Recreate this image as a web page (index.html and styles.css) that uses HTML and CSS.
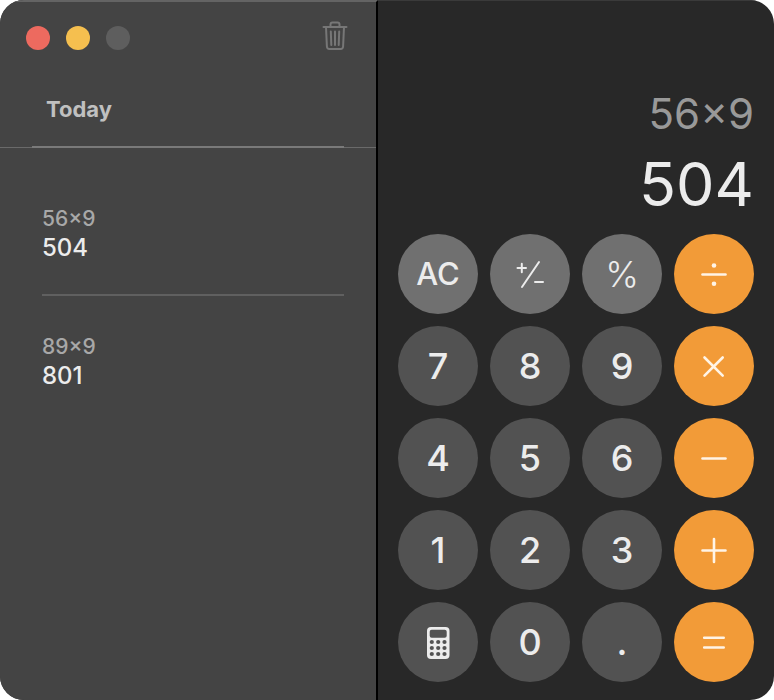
FILE: index.html
```html
<!DOCTYPE html>
<html lang="en">
<head>
  <meta charset="UTF-8">
  <meta name="viewport" content="width=device-width, initial-scale=1.0">
  <title>Calculator</title>
  <link rel="stylesheet" href="styles.css">
</head>
<body>
  <div class="window">
    <aside class="sidebar">
      <div class="toolbar">
        <button class="light close" aria-label="Close"></button>
        <button class="light minimize" aria-label="Minimize"></button>
        <button class="light zoom" aria-label="Zoom" disabled></button>
        <button class="trash" aria-label="Clear history">
          <svg width="26" height="34" viewBox="0 0 26 34">
            <path d="M1.500 6H24.500M8.500 6V3.500Q8.500 1.500 10.500 1.500H15.500Q17.500 1.500 17.500 3.500V6M4 6L4.900 25.500Q5.100 28 7.300 28H18.700Q20.900 28 21.100 25.500L22 6M8.800 10.500L9.300 24M13 10.500V24M17.200 10.500L16.700 24"/>
          </svg>
        </button>
      </div>
      <h2 class="day">Today</h2>
      <ul class="history">
        <li class="entry">
          <div class="entry-expression">56×9</div>
          <div class="entry-result">504</div>
        </li>
        <li class="entry">
          <div class="entry-expression">89×9</div>
          <div class="entry-result">801</div>
        </li>
      </ul>
    </aside>

    <main class="calculator">
      <div class="display">
        <div class="expression">56×9</div>
        <div class="result">504</div>
      </div>
      <div class="keys">
        <button class="key function">AC</button>
        <button class="key function" aria-label="Plus minus">
          <svg width="40" height="40" viewBox="0 0 40 40">
            <path class="thin" d="M7.500 14H16M11.800 9.700V18.300M29 8L12 33M25 28H33"/>
          </svg>
        </button>
        <button class="key function percent">%</button>
        <button class="key operator" aria-label="Divide">
          <svg width="40" height="40" viewBox="0 0 40 40">
            <path d="M8.500 20.500H31.500"/>
            <circle cx="20" cy="11.500" r="2.300"/>
            <circle cx="20" cy="29.800" r="2.300"/>
          </svg>
        </button>

        <button class="key">7</button>
        <button class="key">8</button>
        <button class="key">9</button>
        <button class="key operator" aria-label="Multiply">
          <svg width="40" height="40" viewBox="0 0 40 40">
            <path d="M10.500 11.500L28.700 29.700M28.700 11.500L10.500 29.700"/>
          </svg>
        </button>

        <button class="key">4</button>
        <button class="key">5</button>
        <button class="key">6</button>
        <button class="key operator" aria-label="Subtract">
          <svg width="40" height="40" viewBox="0 0 40 40">
            <path d="M8.500 20.500H31.500"/>
          </svg>
        </button>

        <button class="key">1</button>
        <button class="key">2</button>
        <button class="key">3</button>
        <button class="key operator" aria-label="Add">
          <svg width="40" height="40" viewBox="0 0 40 40">
            <path d="M8.500 20.500H31.500M20 9V32"/>
          </svg>
        </button>

        <button class="key" aria-label="Calculator mode">
          <svg width="40" height="40" viewBox="0 0 40 40">
            <rect x="9" y="5" width="22.500" height="32" rx="4"/>
            <rect class="hole" x="11.700" y="7.700" width="17" height="8" rx="2"/>
            <g class="hole">
              <circle cx="13.800" cy="20" r="2.100"/>
              <circle cx="20.200" cy="20" r="2.100"/>
              <circle cx="26.500" cy="20" r="2.100"/>
              <circle cx="13.800" cy="26" r="2.100"/>
              <circle cx="20.200" cy="26" r="2.100"/>
              <circle cx="26.500" cy="26" r="2.100"/>
              <circle cx="13.800" cy="32" r="2.100"/>
              <circle cx="20.200" cy="32" r="2.100"/>
              <circle cx="26.500" cy="32" r="2.100"/>
            </g>
          </svg>
        </button>
        <button class="key">0</button>
        <button class="key">.</button>
        <button class="key operator" aria-label="Equals">
          <svg width="40" height="40" viewBox="0 0 40 40">
            <path d="M10.200 15.700H29.700M10.200 25.500H29.700"/>
          </svg>
        </button>
      </div>
    </main>
  </div>
</body>
</html>
```

FILE: styles.css
```css
* {
  box-sizing: border-box;
}

body {
  margin: 0;
  background: #fff;
  font-family: Inter, Roboto, sans-serif;
  color: #ececec;
}

button {
  border: none;
  padding: 0;
  font-family: inherit;
  color: inherit;
}

.window {
  display: grid;
  grid-template-columns: minmax(0, 1fr) 396px;
  min-height: 100vh;
  border-radius: 24px;
  overflow: hidden;
  background: #282828;
}

.sidebar {
  background: #444;
  border-top: 2px solid #646464;
  border-right: 2px solid #000;
}

.toolbar {
  display: flex;
  align-items: center;
  gap: 16px;
  height: 72px;
  padding: 0 28px 0 26px;
}

.light {
  width: 24px;
  height: 24px;
  border-radius: 50%;
}

.close {
  background: #ed6a5f;
}

.minimize {
  background: #f5bf4f;
}

.zoom {
  background: #5e5e5e;
}

.trash {
  display: flex;
  margin-left: auto;
  background: none;
}

.trash svg {
  fill: none;
  stroke: #777;
  stroke-width: 2;
  stroke-linecap: round;
  stroke-linejoin: round;
}

.day {
  height: 74px;
  margin: 0;
  padding: 20px 46px 0;
  border-bottom: 1px solid #6a6a6a;
  font-size: 22px;
  line-height: 30px;
  font-weight: 700;
  color: #c0c0c0;
}

.history {
  margin: 0 32px;
  padding: 20px 0 0 10px;
  list-style: none;
  position: relative;
}

.history::before {
  content: '';
  position: absolute;
  top: -2px;
  left: 0;
  right: 0;
  height: 2px;
  background: #7a7a7a;
}

.entry {
  padding: 36px 0 32px;
  line-height: 29px;
}

.entry + .entry {
  border-top: 2px solid #606060;
}

.entry-expression {
  font-size: 21px;
  font-weight: 500;
  color: #a8a8a8;
}

.entry-result {
  font-size: 24px;
  font-weight: 500;
}

.calculator {
  display: flex;
  flex-direction: column;
  justify-content: flex-end;
  gap: 8px;
  padding: 20px 20px 18px;
  border-top: 1px solid #3a3a3a;
}

.display {
  text-align: right;
}

.expression {
  font-size: 42px;
  line-height: 56px;
  color: #999;
}

.result {
  font-size: 61px;
  line-height: 84px;
}

.keys {
  display: grid;
  grid-template-columns: repeat(4, 80px);
  gap: 12px;
}

.key {
  display: flex;
  align-items: center;
  justify-content: center;
  height: 80px;
  border-radius: 50%;
  background: #525252;
  font-size: 36px;
  font-weight: 500;
  line-height: 40px;
}

.function {
  background: #707070;
  font-size: 31px;
}

.percent {
  font-size: 36px;
  font-weight: 300;
}

.operator {
  background: #f29b38;
  color: #fff4e6;
}

.key svg {
  fill: currentColor;
  stroke: currentColor;
  stroke-width: 2.6;
  stroke-linecap: round;
}

.key circle,
.key rect {
  stroke: none;
}

.key .thin {
  stroke-width: 2;
}

.hole {
  fill: #525252;
}
```
